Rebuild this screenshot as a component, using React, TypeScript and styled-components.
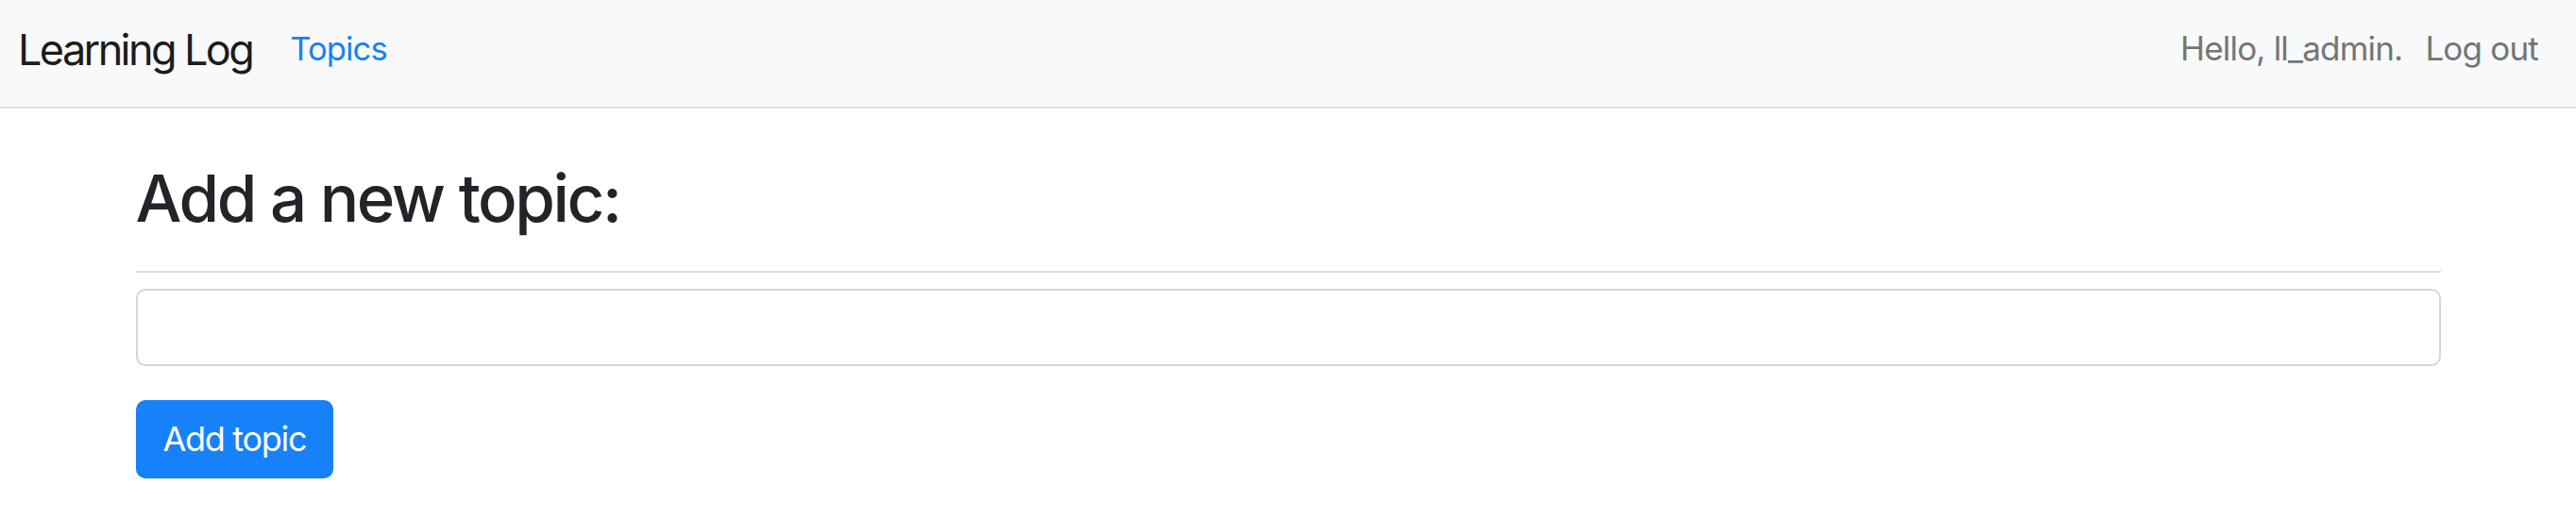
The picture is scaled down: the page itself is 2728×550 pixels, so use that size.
import React from "react";
import styled, { createGlobalStyle } from "styled-components";

const Global = createGlobalStyle`
  * { box-sizing: border-box; }
  html, body { margin: 0; padding: 0; background: #ffffff; }
  body { font-family: Inter, "Noto Sans", "Liberation Sans", sans-serif; color: #212529; }
`;

const Navbar = styled.nav`
  display: flex;
  align-items: center;
  justify-content: space-between;
  height: 115px;
  padding: 0 40px 10px 19px;
  background: #f8f9fa;
  border-bottom: 2px solid #dee0e3;
`;

const NavGroup = styled.div<{ $gap: number }>`
  display: flex;
  align-items: center;
  gap: ${(p) => p.$gap}px;
`;

const Brand = styled.a`
  font-size: 45px;
  line-height: 1.5;
  letter-spacing: -2.6px;
  color: #1c1c1c;
  text-decoration: none;
  margin-top: 3px;
`;

const NavLink = styled.a`
  font-size: 34.5px;
  line-height: 1.5;
  letter-spacing: -0.85px;
  color: #1781fa;
  text-decoration: none;
`;

const NavText = styled.span`
  font-size: 35px;
  line-height: 1.5;
  letter-spacing: -0.8px;
  color: #757575;
`;

const Container = styled.main`
  max-width: 2441px;
  margin: 0 auto;
  padding-top: 53.5px;
`;

const Heading = styled.h2`
  margin: 0;
  font-size: 69px;
  font-weight: 500;
  line-height: 1.2;
  letter-spacing: -2.4px;
  color: #212529;
`;

const Rule = styled.hr`
  margin: 35.5px 0 17px;
  border: 0;
  border-top: 2px solid #dcdee1;
`;

const Form = styled.form`
  display: flex;
  flex-direction: column;
  align-items: flex-start;
  gap: 36px;
`;

const TextInput = styled.input`
  width: 100%;
  height: 82px;
  border: 2px solid #d2d6db;
  border-radius: 10px;
  background: #ffffff;
  font-family: inherit;
  font-size: 35px;
  padding: 0 22px;
  outline: none;
`;

const Button = styled.button`
  height: 83px;
  padding: 0 29px;
  border: 0;
  border-radius: 10px;
  background: #1781fa;
  color: #ffffff;
  font-family: inherit;
  font-size: 36px;
  line-height: 1.5;
  letter-spacing: -1.3px;
  cursor: pointer;
`;

export default function App() {
  return (
    <>
      <Global />
      <Navbar>
        <NavGroup $gap={40}>
          <Brand href="#">Learning Log</Brand>
          <NavLink href="#">Topics</NavLink>
        </NavGroup>
        <NavGroup $gap={24}>
          <NavText>Hello, ll_admin.</NavText>
          <NavText>Log out</NavText>
        </NavGroup>
      </Navbar>
      <Container>
        <Heading>Add a new topic:</Heading>
        <Rule />
        <Form onSubmit={(e) => e.preventDefault()}>
          <TextInput type="text" name="text" />
          <Button type="submit">Add topic</Button>
        </Form>
      </Container>
    </>
  );
}
